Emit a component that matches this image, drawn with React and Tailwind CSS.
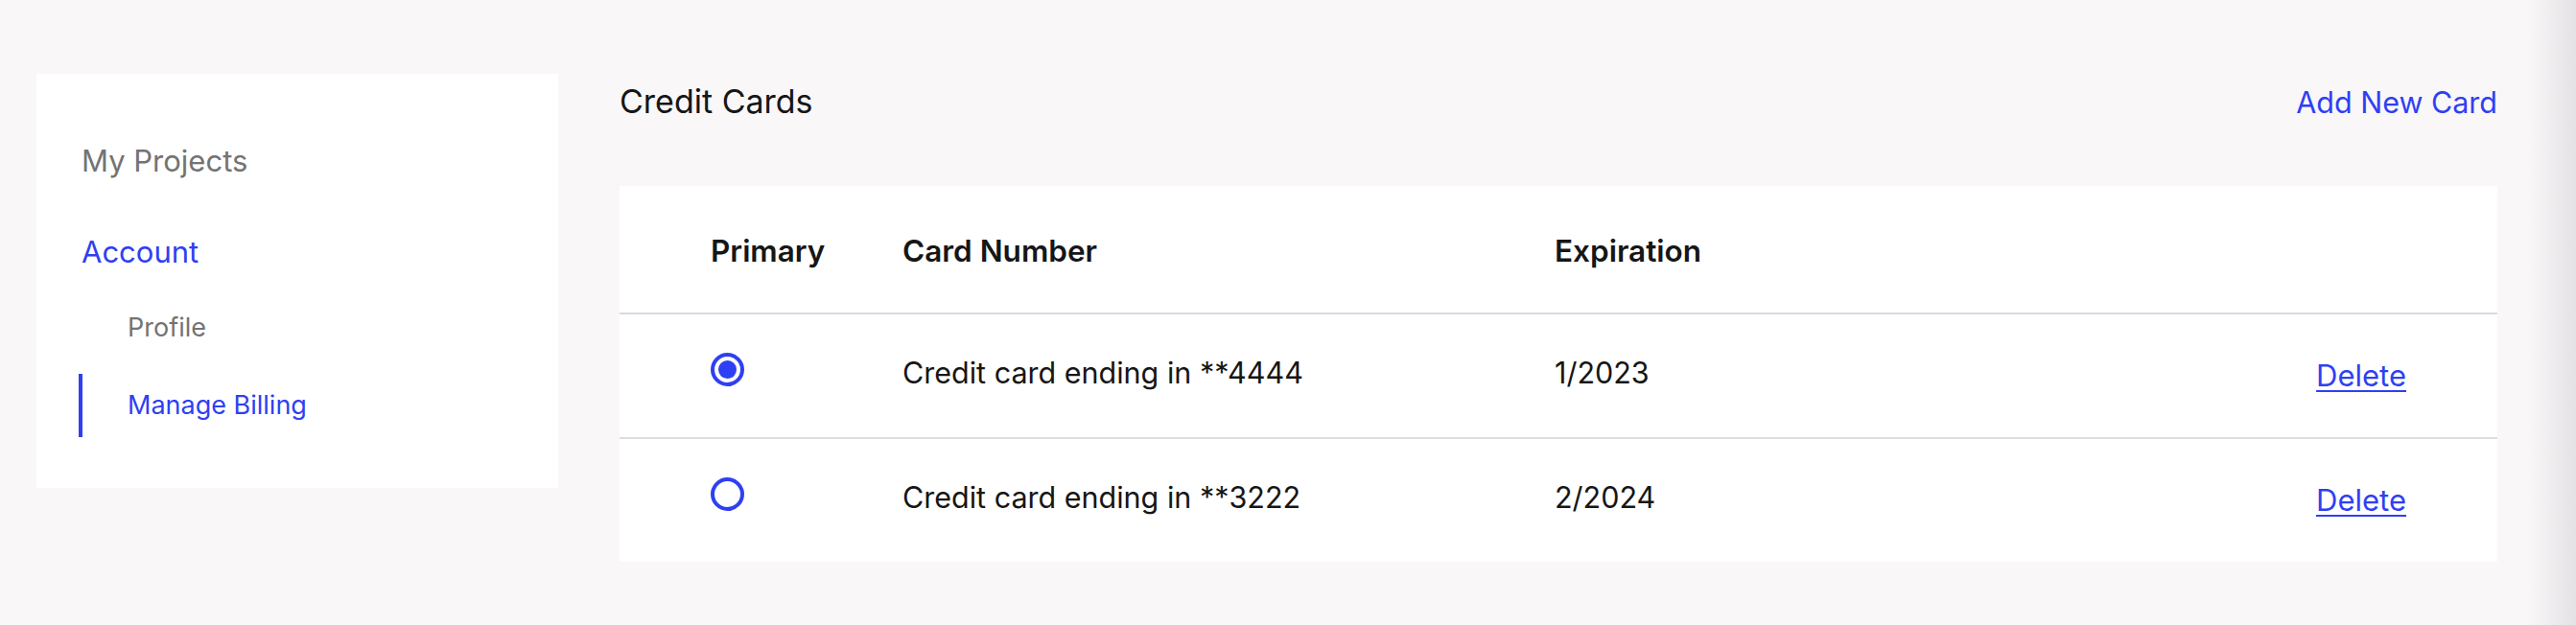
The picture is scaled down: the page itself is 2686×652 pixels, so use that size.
import React from "react";

const BLUE = "text-[#2f3ff3]";

function Radio({ checked }) {
  return (
    <div className="w-[35px] h-[35px] rounded-full border-[4px] border-[#2f3ff3] flex items-center justify-center bg-white">
      {checked && <div className="w-[19px] h-[19px] rounded-full bg-[#2f3ff3]" />}
    </div>
  );
}

function Row({ checked, number, exp, last }) {
  return (
    <div
      className={
        "flex items-center pl-[95px] pr-[95px] " +
        (last ? "h-[128px]" : "h-[130px] border-b-2 border-[#dedede]")
      }
    >
      <div className="w-[200px] flex items-center mb-[13px]">
        <Radio checked={checked} />
      </div>
      <div className="w-[680px] text-[30.5px] leading-[40px] text-[#161616] mb-[7px]">
        {number}
      </div>
      <div className="flex-1 text-[30.5px] leading-[40px] text-[#161616] mb-[7px]">{exp}</div>
      <a
        href="#"
        className={
          "text-[31px] leading-[40px] underline decoration-2 underline-offset-[4px] " + BLUE
        }
      >
        Delete
      </a>
    </div>
  );
}

export default function App() {
  return (
    <div className="flex min-h-[652px] w-full bg-[#f9f7f8] font-['Inter','Liberation_Sans',sans-serif]">
      <div className="flex flex-1 items-start pl-[38px] pt-[77px] gap-[64px]">
        {/* Sidebar */}
        <aside className="w-[544px] bg-white pt-[71px] pb-[53px] flex flex-col">
          <div className="pl-[47px] text-[31px] leading-[40px] text-[#737373]">My Projects</div>
          <div className={"pl-[47px] mt-[55px] text-[31px] leading-[40px] " + BLUE}>Account</div>
          <div className="mt-[26px] ml-[44px] h-[66px] border-l-4 border-transparent pl-[47px] flex items-center">
            <span className="text-[27px] leading-[36px] text-[#737373]">Profile</span>
          </div>
          <div className="mt-[15px] ml-[44px] h-[66px] border-l-4 border-[#2f3ff3] pl-[47px] flex items-center">
            <span className={"text-[27px] leading-[36px] " + BLUE}>Manage Billing</span>
          </div>
        </aside>

        {/* Main */}
        <main className="w-[1958px] flex flex-col">
          <div className="mt-[7px] h-[44px] flex items-baseline justify-between">
            <h1 className="text-[34px] leading-[44px] text-[#161616] font-normal">Credit Cards</h1>
            <a href="#" className={"text-[30.5px] leading-[40px] " + BLUE}>
              Add New Card
            </a>
          </div>

          <div className="mt-[66px] bg-white">
            <div className="flex items-center h-[134px] pl-[95px] pr-[95px] border-b-2 border-[#d9d9e2]">
              <div className="w-[200px] text-[31.5px] leading-[40px] font-semibold text-[#161616] mt-[3px]">
                Primary
              </div>
              <div className="w-[680px] text-[31.5px] leading-[40px] font-semibold text-[#161616] mt-[3px]">
                Card Number
              </div>
              <div className="flex-1 text-[31.5px] leading-[40px] font-semibold text-[#161616] mt-[3px]">
                Expiration
              </div>
            </div>
            <Row checked number="Credit card ending in **4444" exp="1/2023" />
            <Row number="Credit card ending in **3222" exp="2/2024" last />
          </div>
        </main>
      </div>
      <div className="w-[32px]" />
      <div className="w-[50px] self-stretch bg-linear-to-r from-[#f9f7f8] to-[#e4e2e4]" />
    </div>
  );
}
